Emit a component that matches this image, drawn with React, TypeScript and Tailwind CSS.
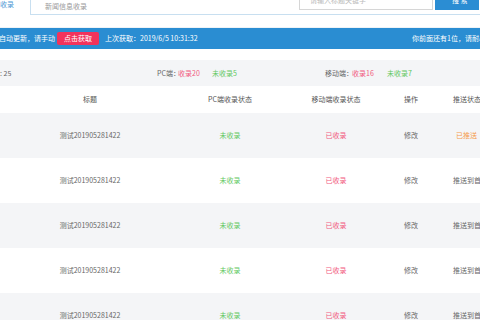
import React from "react";

const font = { fontFamily: '"Noto Sans CJK SC", "Noto Sans", sans-serif' };

type Row = { title: string; pc: string; mobile: string; push: string; pushed: boolean };

const rows: Row[] = [
  { title: "测试201905281422", pc: "未收录", mobile: "已收录", push: "已推送", pushed: true },
  { title: "测试201905281422", pc: "未收录", mobile: "已收录", push: "推送到首页", pushed: false },
  { title: "测试201905281422", pc: "未收录", mobile: "已收录", push: "推送到首页", pushed: false },
  { title: "测试201905281422", pc: "未收录", mobile: "已收录", push: "推送到首页", pushed: false },
  { title: "测试201905281422", pc: "未收录", mobile: "已收录", push: "推送到首页", pushed: false },
];

// column layout shared by header and body
const cols = "grid grid-cols-[180px_100px_112px_38px_90px] w-[520px]";

export default function App() {
  return (
    <div className="w-[480px] h-[320px] overflow-hidden bg-white text-[7px] leading-none text-[#666]" style={font}>
      {/* Search area */}
      <div className="h-[28px] flex items-start border-b border-[#eef3f7]">
        <span className="w-[30px] mt-[1px] text-[#4a98d4] whitespace-nowrap">收录</span>
        <div className="flex-1 h-[16px] flex items-start border-l border-b border-[#c8dff0] -mt-px">
          <span className="ml-[14px] mt-[4px] text-[#999] whitespace-nowrap">新闻信息收录</span>
          <div className="ml-[212px] w-[134px] h-[11px] border border-[#d6d6d6] border-t-0 flex items-start">
            <span className="ml-[10px] -mt-[2px] text-[#bbb] whitespace-nowrap">请输入标题关键字</span>
          </div>
          <div className="ml-[2px] w-[44px] h-[11px] bg-[#2b8dd3] flex items-start">
            <span className="ml-[17px] -mt-[2px] text-white whitespace-nowrap">搜 索</span>
          </div>
        </div>
      </div>

      {/* Blue notice bar */}
      <div className="h-[21px] bg-[#2a8dd2] flex items-center text-white whitespace-nowrap">
        <span className="w-[58px] -ml-[1px]">自动更新，请手动</span>
        <button className="w-[42px] h-[13px] bg-[#f2335c] rounded-[2px] text-white text-[7px] flex items-center justify-center" style={font}>
          点击获取
        </button>
        <span className="ml-[6px]">上次获取：2019/6/5 10:31:32</span>
        <span className="ml-[auto] mr-[-20px] shrink-0">你前面还有1位，请耐心等待</span>
      </div>

      <div className="h-[11px]" />

      {/* Stats */}
      <div className="h-[26px] bg-[#f4f5f7] flex items-center whitespace-nowrap">
        <span className="w-[157px]">: 25</span>
        <span className="w-[21px]">PC端：</span>
        <span className="w-[34px] text-[#f25a80]">收录20</span>
        <span className="w-[113px] text-[#62c862]">未收录5</span>
        <span className="w-[27px]">移动端：</span>
        <span className="w-[35px] text-[#f25a80]">收录16</span>
        <span className="text-[#62c862]">未收录7</span>
      </div>

      {/* Table header */}
      <div className={`${cols} h-[27px] items-center text-center whitespace-nowrap text-[#555]`}>
        <span>标题</span>
        <span>PC端收录状态</span>
        <span>移动端收录状态</span>
        <span>操作</span>
        <span className="text-left pl-[23px]">推送状态</span>
      </div>

      {/* Table body */}
      {rows.map((r, i) => (
        <div
          key={i}
          className={`${cols} h-[45px] items-center text-center whitespace-nowrap ${i % 2 === 0 ? "bg-[#f4f5f7]" : "bg-white"}`}
        >
          <span>{r.title}</span>
          <span className="text-[#62c862]">{r.pc}</span>
          <span className="text-[#f25a80]">{r.mobile}</span>
          <span>修改</span>
          <span className={`text-left ${r.pushed ? "pl-[26px] text-[#f59a4a]" : "pl-[23px]"}`}>{r.push}</span>
        </div>
      ))}
    </div>
  );
}
